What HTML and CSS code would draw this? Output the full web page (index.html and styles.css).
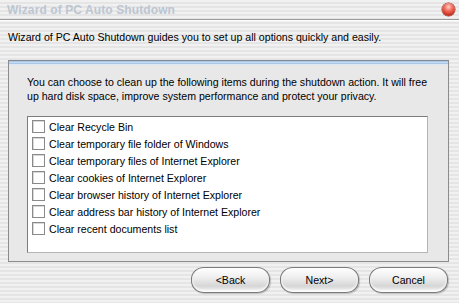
FILE: index.html
```html
<!DOCTYPE html>
<html>
<head>
<meta charset="utf-8">
<link rel="stylesheet" href="styles.css">
</head>
<body>
<div class="window">
  <div class="titlebar">
    <span class="title">Wizard of PC Auto Shutdown</span>
    <span class="close"></span>
  </div>
  <div class="intro">Wizard of PC Auto Shutdown guides you to set up all options quickly and easily.</div>
  <div class="panel">
    <p class="desc">You can choose to clean up the following items during the shutdown action. It will free up hard disk space, improve system performance and protect your privacy.</p>
    <ul class="list">
      <li><span class="box"></span>Clear Recycle Bin</li>
      <li><span class="box"></span>Clear temporary file folder of Windows</li>
      <li><span class="box"></span>Clear temporary files of Internet Explorer</li>
      <li><span class="box"></span>Clear cookies of Internet Explorer</li>
      <li><span class="box"></span>Clear browser history of Internet Explorer</li>
      <li><span class="box"></span>Clear address bar history of Internet Explorer</li>
      <li><span class="box"></span>Clear recent documents list</li>
    </ul>
  </div>
  <div class="buttons">
    <button class="btn">&lt;Back</button>
    <button class="btn">Next&gt;</button>
    <button class="btn">Cancel</button>
  </div>
</div>
</body>
</html>
```
FILE: styles.css
```css
html, body {
  margin: 0;
  padding: 0;
}
body {
  width: 459px;
  height: 303px;
  overflow: hidden;
  font-family: "Liberation Sans", Arial, sans-serif;
  font-size: 10.6px;
  color: #000;
  background: repeating-linear-gradient(to bottom, #f1f1f1 0, #f1f1f1 2px, #e5e5e5 2px, #e5e5e5 4px);
}
.window {
  display: flex;
  flex-direction: column;
  height: 303px;
}
.titlebar {
  height: 19px;
  display: flex;
  align-items: center;
  justify-content: space-between;
  padding: 0 4px 0 7px;
  border-bottom: 1px solid #9a9a9a;
  box-shadow: 0 1px 0 #ffffff;
}
.title {
  font-weight: bold;
  font-size: 12px;
  color: #bcc6d2;
  letter-spacing: 0.1px;
}
.close {
  width: 13px;
  height: 13px;
  border-radius: 50%;
  background: radial-gradient(circle at 50% 30%, #ffd0c8 0, #f07060 35%, #c82a1c 75%, #8a1a10 100%);
  box-shadow: 0 0 0 0.5px #8a3a30;
}
.intro {
  padding: 11px 0 0 8px;
  height: 29px;
}
.panel {
  margin: 0 10px 0 8px;
  height: 202px;
  box-sizing: border-box;
  background: #e8e8e8;
  border: 1px solid #8c8c8c;
  border-top: 1px solid #7f8a96;
  box-shadow: inset 0 1px 0 #a9c6e6, inset 0 2px 0 #c6dbf2, inset 0 3px 0 #a9c6e6, inset 0 4px 0 #dde8f4;
  padding: 14px 20px 0 18px;
}
.desc {
  margin: 0;
  line-height: 14px;
}
.list {
  list-style: none;
  margin: 13px 0 0 0;
  padding: 1px 0 0 4px;
  height: 137px;
  box-sizing: border-box;
  background: #fff;
  border: 1px solid #7c7c7c;
  border-right-color: #b5b5b5;
  border-bottom-color: #b5b5b5;
}
.list li {
  height: 17px;
  display: flex;
  align-items: center;
}
.box {
  width: 11px;
  height: 11px;
  border: 1px solid #8a8a8a;
  box-shadow: inset 1px 1px 0 #d8d8d8;
  background: #fff;
  margin-right: 4px;
}
.buttons {
  display: flex;
  justify-content: flex-end;
  gap: 10px;
  padding: 5px 11px 0 0;
}
.btn {
  width: 79px;
  height: 26px;
  border-radius: 13px / 12px;
  border: 1px solid #7a7a7a;
  background: linear-gradient(to bottom, #ffffff 0%, #eeeeee 40%, #d6d6d6 75%, #f4f4f4 100%);
  box-shadow: inset 0 -2px 2px rgba(255,255,255,0.8), 1px 1px 1px rgba(0,0,0,0.2);
  font-family: "Liberation Sans", Arial, sans-serif;
  font-size: 10.6px;
  color: #000;
  padding: 0;
}
```
